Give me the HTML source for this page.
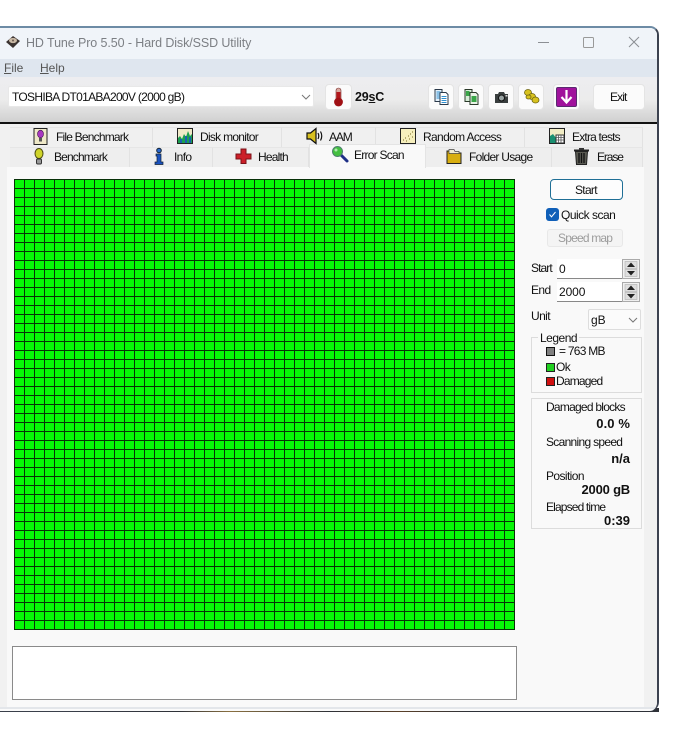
<!DOCTYPE html>
<html><head><meta charset="utf-8"><style>
html,body{margin:0;padding:0;background:#fff}
body{width:689px;height:740px;position:relative;overflow:hidden;font-family:"Liberation Sans",sans-serif;font-size:12px;color:#111}
.a{position:absolute}
.t{position:absolute;white-space:nowrap;line-height:14px}
.tab{position:absolute;background:#f0f0f0;border-right:1px solid #e2e2e2;border-top:1px solid #e6e6e6;box-sizing:border-box}
.btn{position:absolute;background:#fbfbfb;border:1px solid #e4e4e4;border-radius:4px;box-sizing:border-box}
svg{position:absolute;overflow:visible}
</style></head><body>
<!-- window -->
<div class="a" style="left:0;top:708px;width:659px;height:4px;background:linear-gradient(90deg,#3a3f4a 0,#3a3f4a 60px,#2e3138 180px,#8a7040 230px,#2e3138 330px,#5a4028 400px,#2e3138 470px,#2e3138 100%)"></div>
<div class="a" style="left:0;top:26px;width:659px;height:685px;background:#fafafa;border-top:2px solid #6d8ba5;border-right:2px solid #3c4250;border-radius:0 9px 9px 0;box-sizing:border-box;overflow:hidden">
 <div class="a" style="left:0;top:0;width:657px;height:31px;background:#f0f4f9"></div>
 <div class="a" style="left:0;top:31px;width:657px;height:19px;background:#dfe6ef"></div>
 <div class="a" style="left:0;top:49px;width:657px;height:45px;background:linear-gradient(#ededf0,#ececec 50%,#d0d0d0)"></div>
 <div class="a" style="left:0;top:94px;width:657px;height:1.5px;background:#111"></div>
 <div class="a" style="left:0;top:96px;width:657px;height:585px;background:#f1f1f1"></div>
 <div class="a" style="left:7px;top:139px;width:637px;height:540px;background:#f9f9f9"></div>
 <div class="a" style="left:0;top:679px;width:657px;height:2px;background:#e3e6ea"></div>
</div>

<!-- title -->
<svg style="left:5px;top:35px" width="16" height="14" viewBox="0 0 16 14"><path d="M1 7 8 1l7 5-7 7z" fill="#3a3230"/><ellipse cx="8" cy="5.5" rx="4" ry="2.6" fill="#c9b9a5"/><circle cx="8" cy="5.5" r="1" fill="#6b5a50"/></svg>
<div class="t" style="left:26px;top:36px;color:#7c7f84;font-size:12.5px;letter-spacing:-.1px">HD Tune Pro 5.50 - Hard Disk/SSD Utility</div>
<div class="a" style="left:538px;top:42px;width:11px;height:1px;background:#8c8f94"></div>
<div class="a" style="left:583px;top:37px;width:9px;height:9px;border:1px solid #999;border-radius:1.5px"></div>
<svg style="left:628px;top:36px" width="12" height="12" viewBox="0 0 12 12"><path d="M1 1 11 11M11 1 1 11" stroke="#8c8f94" stroke-width="1" fill="none"/></svg>
<div class="t" style="left:4px;top:61px;color:#555"><u>F</u>ile</div>
<div class="t" style="left:40px;top:61px;color:#555"><u>H</u>elp</div>

<!-- drive combo -->
<div class="a" style="left:8px;top:86px;width:306px;height:21px;background:#fff;border-radius:2px;border:1px solid #e8e8e8;box-sizing:border-box"></div>
<div class="t" style="left:12px;top:90px;letter-spacing:-.7px">TOSHIBA DT01ABA200V (2000 gB)</div>
<svg style="left:301px;top:94px" width="10" height="6" viewBox="0 0 10 6"><path d="M1 1 5 5 9 1" stroke="#777" fill="none"/></svg>

<!-- thermometer -->
<div class="btn" style="left:325px;top:84px;width:27px;height:26px"></div>
<svg style="left:332px;top:87px" width="13" height="20" viewBox="0 0 13 20"><rect x="4" y="1" width="5" height="13" rx="2.500" fill="#d9a9a0" stroke="#7a3030" stroke-width=".6"/><rect x="4.500" y="5" width="4" height="10" fill="#b3161a"/><circle cx="6.500" cy="15" r="4.400" fill="#a01014"/></svg>
<div class="t" style="left:355px;top:90px;font-weight:700;font-size:12.5px;letter-spacing:-.2px">29<u>s</u>C</div>

<!-- toolbar buttons -->
<div class="btn" style="left:428px;top:84px;width:26px;height:26px"></div>
<div class="btn" style="left:458px;top:84px;width:26px;height:26px"></div>
<div class="btn" style="left:488px;top:84px;width:26px;height:26px"></div>
<div class="btn" style="left:518px;top:84px;width:26px;height:26px"></div>
<div class="btn" style="left:553px;top:84px;width:27px;height:26px"></div>
<div class="btn" style="left:593px;top:84px;width:52px;height:26px"></div>
<div class="t" style="left:610px;top:90px;letter-spacing:-.9px">Exit</div>
<svg style="left:434px;top:89px" width="16" height="16" viewBox="0 0 16 16"><path d="M1 .5h7v12H1z" fill="#e6f1fa" stroke="#2b3a4a"/><path d="M6 3.500h6l2 2v10H6z" fill="#fff" stroke="#2b3a4a"/><path d="M2.500 3h4M2.500 5h3M2.500 7h3M2.500 9h3M7.500 7.500h5M7.500 9.500h5M7.500 11.500h5M7.500 13.500h5" stroke="#2f8fd0"/></svg>
<svg style="left:464px;top:89px" width="16" height="16" viewBox="0 0 16 16"><path d="M1 .5h7v12H1z" fill="#d6ecd6" stroke="#2b3a2a"/><path d="M6 3.500h6l2 2v10H6z" fill="#eaf3e6" stroke="#2b3a2a"/><path d="M2 2h3.500v5H2z" fill="#3aa648"/><path d="M7.500 7h5v6h-5z" fill="#3aa648"/></svg>
<svg style="left:494px;top:91px" width="15" height="13" viewBox="0 0 15 13"><path d="M1 3h3l1-2h5l1 2h3v9H1z" fill="#3a3f3f"/><circle cx="7.500" cy="7" r="3" fill="#9aa4a4" stroke="#111"/><rect x="11.500" y="4" width="2" height="1.500" fill="#ddd"/></svg>
<svg style="left:523px;top:88px" width="17" height="17" viewBox="0 0 17 17"><g fill="#d8c21f" stroke="#6d6410" stroke-width=".8"><ellipse cx="5" cy="4.500" rx="3.500" ry="3"/><ellipse cx="9" cy="8.500" rx="3.500" ry="3"/><ellipse cx="12.500" cy="12" rx="3.500" ry="3"/><ellipse cx="5.500" cy="9" rx="2.500" ry="2"/></g></svg>
<svg style="left:556px;top:87px" width="21" height="20" viewBox="0 0 21 20"><rect x=".5" y=".5" width="20" height="19" rx="1.500" fill="#a0129c" stroke="#5a2a70"/><path d="M10.500 3v12M5.500 10l5 5.500 5-5.500" stroke="#fff" stroke-width="2.200" fill="none"/></svg>

<!-- tabs row 1 -->
<div class="tab" style="left:10px;top:127px;width:143px;height:20px"></div>
<div class="tab" style="left:153px;top:127px;width:129px;height:20px"></div>
<div class="tab" style="left:282px;top:127px;width:94px;height:20px"></div>
<div class="tab" style="left:376px;top:127px;width:149px;height:20px"></div>
<div class="tab" style="left:525px;top:127px;width:118px;height:20px"></div>
<!-- tabs row 2 -->
<div class="tab" style="left:10px;top:147px;width:120px;height:20px;background:#eeeeee"></div>
<div class="tab" style="left:130px;top:147px;width:83px;height:20px;background:#eeeeee"></div>
<div class="tab" style="left:213px;top:147px;width:96px;height:20px;background:#eeeeee"></div>
<div class="tab" style="left:426px;top:147px;width:126px;height:20px;background:#eeeeee"></div>
<div class="tab" style="left:552px;top:147px;width:91px;height:20px;background:#eeeeee"></div>
<div class="a" style="left:309px;top:144px;width:117px;height:24px;background:#f9f9f9;border:1px solid #e4e4e4;border-bottom:0;box-sizing:border-box"></div>

<div class="t" style="left:56px;top:130px;letter-spacing:-.8px">File Benchmark</div>
<div class="t" style="left:200px;top:130px;letter-spacing:-.72px">Disk monitor</div>
<div class="t" style="left:329px;top:130px;letter-spacing:-1.1px">AAM</div>
<div class="t" style="left:423px;top:130px;letter-spacing:-.65px">Random Access</div>
<div class="t" style="left:572px;top:130px;letter-spacing:-.8px">Extra tests</div>
<div class="t" style="left:54px;top:150px;letter-spacing:-.85px">Benchmark</div>
<div class="t" style="left:174px;top:150px;letter-spacing:-.65px">Info</div>
<div class="t" style="left:258px;top:150px;letter-spacing:-.8px">Health</div>
<div class="t" style="left:354px;top:148px;letter-spacing:-.75px">Error Scan</div>
<div class="t" style="left:469px;top:150px;letter-spacing:-.72px">Folder Usage</div>
<div class="t" style="left:597px;top:150px;letter-spacing:-1.1px">Erase</div>

<!-- tab icons -->
<svg style="left:33px;top:128px" width="15" height="17" viewBox="0 0 15 17"><rect x="1" y=".5" width="13" height="16" fill="#efe9c8" stroke="#222"/><ellipse cx="7.500" cy="6" rx="3" ry="3.800" fill="#a838c0" stroke="#401050" stroke-width=".6"/><rect x="6" y="10" width="3" height="3.500" fill="#555"/></svg>
<svg style="left:177px;top:128px" width="16" height="16" viewBox="0 0 16 16"><rect x=".5" y=".5" width="15" height="15" fill="#efe9c8" stroke="#222"/><path d="M1 15V10l2-2 2 3 2-5 2 3 2-6 2 5 2-2v9z" fill="#1a9f50"/><path d="M3 15v-4h2v4zM8 15V8h2v7zM12 15V9h2v6z" fill="#1a5fb0"/></svg>
<svg style="left:306px;top:128px" width="17" height="16" viewBox="0 0 17 16"><path d="M1 5h3.500L10 .5v15L4.500 11H1z" fill="#d8c020" stroke="#111" stroke-width="1.200"/><path d="M12 5q1.500 3 0 6M14.500 3.500q2.500 4.500 0 9" stroke="#111" fill="none" stroke-width="1.200"/></svg>
<svg style="left:400px;top:128px" width="16" height="16" viewBox="0 0 16 16"><rect x=".5" y=".5" width="15" height="15" fill="#f6efbd" stroke="#222"/><path d="M3 12h1M5 10h1M6 13h1M8 8h1M9 11h1M10 6h1M12 4h1M12 9h1" stroke="#776a20"/></svg>
<svg style="left:549px;top:128px" width="16" height="16" viewBox="0 0 16 16"><rect x=".5" y=".5" width="15" height="15" fill="#f1ecc4" stroke="#222"/><path d="M1 15V8l3-2 3 4v5z" fill="#1a8f70"/><rect x="7" y="7" width="8" height="8" fill="#fff" stroke="#333"/><path d="M7 9.500h8M7 12h8M9.500 7v8M12 7v8" stroke="#555" stroke-width=".8"/></svg>
<svg style="left:34px;top:148px" width="10" height="17" viewBox="0 0 10 17"><ellipse cx="5" cy="5.500" rx="4" ry="5" fill="#cfd42a" stroke="#4a4a10"/><rect x="2.500" y="11" width="5" height="5" rx="1.200" fill="#999" stroke="#333"/></svg>
<svg style="left:154px;top:148px" width="10" height="17" viewBox="0 0 10 17"><circle cx="5" cy="2.500" r="2.300" fill="#2a68d0" stroke="#123"/><path d="M2 6h5v8h2v2.500H1V14h2V8H2z" fill="#1a52c0" stroke="#123" stroke-width=".7"/></svg>
<svg style="left:235px;top:148px" width="17" height="16" viewBox="0 0 17 16"><path d="M6 1h5v5h5v5h-5v4.500H6V11H1V6h5z" fill="#cc1f28" stroke="#7a1218"/></svg>
<svg style="left:331px;top:145px" width="18" height="18" viewBox="0 0 18 18"><path d="M10 10l6 6" stroke="#1d2f86" stroke-width="3" stroke-linecap="round"/><circle cx="6.500" cy="6.500" r="5" fill="#44c040" stroke="#4f7f6f"/><circle cx="5" cy="5" r="1.500" fill="#b0eab0"/></svg>
<svg style="left:446px;top:148px" width="16" height="16" viewBox="0 0 16 16"><path d="M1 3h5l1 2h8v10.500H1z" fill="#d8ae10" stroke="#222"/><path d="M3 1.500h5l1 2h4v2H3z" fill="#f0ecd0" stroke="#444" stroke-width=".7"/></svg>
<svg style="left:574px;top:148px" width="15" height="17" viewBox="0 0 15 17"><path d="M0 2.500h15" stroke="#222" stroke-width="2"/><rect x="5" y="0" width="5" height="2" fill="#333"/><path d="M1.500 3.500h12l-1 13h-10z" fill="#5a5a52" stroke="#222"/><path d="M5 5v10M7.500 5v10M10 5v10" stroke="#111" stroke-width="1.300"/></svg>

<!-- grid -->
<div class="a" style="left:14px;top:179px;width:501px;height:451px;background-color:#06f806;background-image:linear-gradient(90deg,#083208 1px,transparent 1px),linear-gradient(#083208 1px,transparent 1px);background-size:10px 9px;box-sizing:border-box;border-right:1px solid #083208;border-bottom:1px solid #083208"></div>

<!-- log box -->
<div class="a" style="left:12px;top:646px;width:505px;height:54px;background:#fff;border:1px solid #8a8a8a;box-sizing:border-box"></div>

<!-- right side -->
<div class="a" style="left:550px;top:179px;width:73px;height:21px;background:#fdfdfd;border:1px solid #1f6f96;border-radius:4px;box-sizing:border-box"></div>
<div class="t" style="left:575px;top:183px;letter-spacing:-.7px">Start</div>
<div class="a" style="left:546px;top:208px;width:13px;height:13px;background:#0f5fb8;border-radius:3px"></div>
<svg style="left:548px;top:210px" width="9" height="9" viewBox="0 0 9 9"><path d="M1.500 4.500 3.500 6.800 7.500 2" stroke="#fff" fill="none"/></svg>
<div class="t" style="left:561px;top:208px;letter-spacing:-.5px">Quick scan</div>
<div class="a" style="left:547px;top:229px;width:76px;height:18px;background:#f4f4f4;border:1px solid #e8e8e8;border-radius:3px;box-sizing:border-box"></div>
<div class="t" style="left:558px;top:231px;color:#9c9c9c;letter-spacing:-.8px">Speed map</div>

<div class="t" style="left:531px;top:261px;letter-spacing:-.9px">Start</div>
<div class="a" style="left:557px;top:259px;width:83px;height:20px;background:#fff;border-bottom:1px solid #888;box-sizing:border-box"></div>
<div class="t" style="left:559px;top:262px">0</div>
<div class="t" style="left:531px;top:283px;letter-spacing:-.6px">End</div>
<div class="a" style="left:557px;top:282px;width:83px;height:20px;background:#fff;border-bottom:1px solid #888;box-sizing:border-box"></div>
<div class="t" style="left:559px;top:285px;letter-spacing:-.1px">2000</div>
<div class="a" style="left:622px;top:259px;width:18px;height:20px;background:#f0f0f0;border:1px solid #aaa;box-sizing:border-box"></div>
<div class="a" style="left:622px;top:282px;width:18px;height:20px;background:#f0f0f0;border:1px solid #aaa;box-sizing:border-box"></div>
<svg style="left:624px;top:261px" width="14" height="40" viewBox="0 0 14 40"><path d="M1 .5h12v7H1zM1 8.500h12v7H1zM1 23.500h12v7H1zM1 31.500h12v7H1z" fill="#dedede" stroke="#b8b8b8" stroke-width=".7"/><path d="M7 1.500 11 6H3zM7 14.500 11 10H3zM7 24.500 11 29H3zM7 37.500 11 33H3z" fill="#222"/></svg>

<div class="t" style="left:531px;top:309px;letter-spacing:-.6px">Unit</div>
<div class="a" style="left:588px;top:309px;width:53px;height:21px;background:#fbfbfb;border:1px solid #ddd;border-radius:2px;box-sizing:border-box"></div>
<div class="t" style="left:591px;top:313px">gB</div>
<svg style="left:628px;top:317px" width="10" height="6" viewBox="0 0 10 6"><path d="M1 1 5 5 9 1" stroke="#777" fill="none"/></svg>

<!-- legend -->
<div class="a" style="left:531px;top:337px;width:111px;height:56px;border:1px solid #dcdcdc;box-sizing:border-box"></div>
<div class="t" style="left:538px;top:331px;background:#f9f9f9;padding:0 2px;letter-spacing:-.5px">Legend</div>
<div class="a" style="left:546px;top:347px;width:7px;height:7px;background:#808080;border:1px solid #111"></div>
<div class="t" style="left:559px;top:344px;letter-spacing:-.75px">= 763 MB</div>
<div class="a" style="left:546px;top:363px;width:7px;height:7px;background:#20d020;border:1px solid #222"></div>
<div class="t" style="left:556px;top:360px;letter-spacing:-.6px">Ok</div>
<div class="a" style="left:546px;top:377px;width:7px;height:7px;background:#d01010;border:1px solid #222"></div>
<div class="t" style="left:556px;top:374px;letter-spacing:-.8px">Damaged</div>

<!-- stats -->
<div class="a" style="left:531px;top:398px;width:111px;height:131px;border:1px solid #dcdcdc;box-sizing:border-box"></div>
<div class="t" style="left:546px;top:400px;letter-spacing:-.75px">Damaged blocks</div>
<div class="t" style="right:59px;top:417px;font-weight:700;font-size:13px;letter-spacing:.1px">0.0 %</div>
<div class="t" style="left:546px;top:435px;letter-spacing:-.7px">Scanning speed</div>
<div class="t" style="right:59px;top:452px;font-weight:700;font-size:13px">n/a</div>
<div class="t" style="left:546px;top:469px;letter-spacing:-.6px">Position</div>
<div class="t" style="right:59px;top:483px;font-weight:700;font-size:13px;letter-spacing:-.2px">2000 gB</div>
<div class="t" style="left:546px;top:500px;letter-spacing:-.85px">Elapsed time</div>
<div class="t" style="right:59px;top:514px;font-weight:700;font-size:13px">0:39</div>
</body></html>
